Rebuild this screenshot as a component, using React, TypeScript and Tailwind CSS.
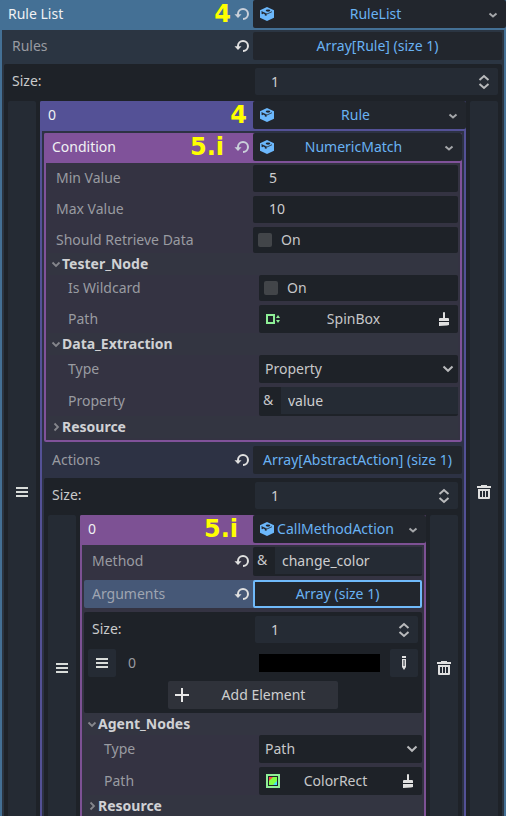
import React, { useId } from "react";

type Kids = { children?: React.ReactNode };

/* ---------- icons ---------- */

const CubeIcon = () => (
  <svg width="16" height="16" viewBox="0 0 16 16" className="shrink-0" aria-hidden="true">
    <path d="M8 1 15 4.200V11.800L8 15 1 11.800V4.200Z" fill="#6cb8fc" />
    <path d="M2.600 5.600 8 8 13 5.700" fill="none" stroke="#22262d" strokeWidth=".8" />
    <path d="M2.600 5.600 7.600 7.900V9.800L5.800 9.400V8.200L4.200 7.600 3.200 8.300 2.600 8Z" fill="#22262d" />
    <ellipse cx="9" cy="4.600" rx="2.300" ry="1.100" fill="#22262d" />
  </svg>
);

const RevertIcon = ({ color = "#e0e0e0" }: { color?: string }) => (
  <svg width="16" height="16" viewBox="0 0 16 16" fill="none" aria-hidden="true">
    <path d="M4 9V8a5 5 0 1 1 5 5" stroke={color} strokeWidth="2" />
    <path d="M.5 8.200H7.500L4 12Z" fill={color} />
  </svg>
);

const Chevron = ({ color = "#a5a7aa" }: { color?: string }) => (
  <svg width="10" height="8" viewBox="0 0 10 8" fill="none" aria-hidden="true">
    <path d="M1.500 2.500 5 5.500 8.500 2.500" stroke={color} strokeWidth="2" />
  </svg>
);

const FoldIcon = ({ open }: { open: boolean }) => (
  <svg width="10" height="10" viewBox="0 0 10 10" fill="none" aria-hidden="true">
    <path d={open ? "M1.500 3.500 5 7 8.500 3.500" : "M3.500 1.500 7 5 3.500 8.500"} stroke="#85868c" strokeWidth="1.800" />
  </svg>
);

const SelectArrow = () => (
  <svg width="12" height="8" viewBox="0 0 12 8" fill="none" aria-hidden="true">
    <path d="M1.500 1.500 6 5.800 10.500 1.500" stroke="#b9babc" strokeWidth="2" />
  </svg>
);

const UpDownIcon = () => (
  <svg width="12" height="16" viewBox="0 0 12 16" fill="none" aria-hidden="true">
    <path d="M1.500 6 6 2l4.500 4M1.500 10 6 14l4.500-4" stroke="#b9babc" strokeWidth="2" />
  </svg>
);

const GripIcon = () => (
  <svg width="12" height="10" viewBox="0 0 12 10" fill="#d8dcd9" aria-hidden="true">
    <path d="M0 0h12v2H0zM0 4h12v2H0zM0 8h12v2H0z" />
  </svg>
);

const TrashIcon = () => (
  <svg width="14" height="14" viewBox="0 0 14 14" aria-hidden="true">
    <path
      fill="#e0e0e0"
      fillRule="evenodd"
      d="M4 0h6v1h4v2H0V1h4zM1 4h12v9a1 1 0 0 1-1 1H2a1 1 0 0 1-1-1zM3 6v6h2V6zM6 6v6h2V6zM9 6v6h2V6z"
    />
  </svg>
);

const BrushIcon = () => (
  <svg width="16" height="16" viewBox="0 0 16 16" fill="#e0e0e0" aria-hidden="true">
    <path d="M7 2a1 1 0 0 1 2 0V7h3a1 1 0 0 1 1 1v2H3V8a1 1 0 0 1 1-1h3zM3 11h10v3l-2 .500L3 15z" />
  </svg>
);

const PencilIcon = () => (
  <svg width="6" height="14" viewBox="0 0 6 14" aria-hidden="true">
    <path fill="#e0e0e0" fillRule="evenodd" d="M1 0h4v2H1zM1 3h4v8l-2 3-2-3zM2.500 4v6h1V4z" />
  </svg>
);

const PlusIcon = () => (
  <svg width="14" height="14" viewBox="0 0 14 14" fill="#e8e8e8" aria-hidden="true">
    <path d="M6 0h2v6h6v2H8v6H6V8H0V6h6z" />
  </svg>
);

const SpinBoxIcon = () => (
  <svg width="16" height="16" viewBox="0 0 16 16" aria-hidden="true">
    <path d="M2 4h7v8H2z" fill="none" stroke="#8eef97" strokeWidth="2" />
    <path d="M11 7 13 4l2 3zM11 9l2 3 2-3z" fill="#8eef97" />
  </svg>
);

const ColorRectIcon = () => (
  <svg width="16" height="16" viewBox="0 0 16 16" aria-hidden="true">
    <path d="M2 2h12v12H2z" fill="none" stroke="#8eef97" strokeWidth="2" />
    <path d="M4 4h8v8H4z" fill="#80ff45" />
    <path d="M4 4h4L4 8z" fill="#ff4545" />
    <path d="M12 8v4H8z" fill="#45d7ff" />
  </svg>
);

/* ---------- building blocks ---------- */

const Revert = ({ soft }: { soft?: boolean }) => (
  <button type="button" aria-label="Revert value" className="mr-[3px] flex h-4 w-4 shrink-0 items-center justify-center">
    <RevertIcon color={soft ? "#c9d0da" : "#e0e0e0"} />
  </button>
);

const Mark = ({ className, children }: Kids & { className: string }) => (
  <span className={`ml-auto font-['DejaVu_Sans',sans-serif] text-2xl leading-6 font-bold text-[#ffff00] ${className}`}>
    {children}
  </span>
);

type PickerProps = Kids & { label: string; type: string; width: string; color: string };

/* Coloured title bar of a sub-resource with its type picker. */
const ResourceHeader = ({ label, type, width, color, children }: PickerProps) => {
  const id = useId();
  return (
    <div className={`flex h-[30px] items-stretch rounded-t-xs ${color}`}>
      <div className={`flex shrink-0 items-center pb-[2px] pl-2 ${width}`}>
        <label htmlFor={id} className="text-[#f0f1f3]">{label}</label>
        {children}
      </div>
      <div className="mb-[2px] flex min-w-0 flex-1 rounded-xs bg-[#22262d]">
        <button id={id} type="button" className="flex min-w-0 flex-1 items-center pl-[6px] text-[#69b2f3]">
          <CubeIcon />
          <span className="flex-1 text-center whitespace-nowrap">{type}</span>
        </button>
        <button type="button" aria-label={`${type} options`} className="flex w-[30px] items-center justify-end pt-[2px] pr-2">
          <Chevron />
        </button>
      </div>
    </div>
  );
};

const Row = ({
  label,
  id,
  width,
  indent = "pl-2",
  height = "h-7",
  tone = "text-[#999ba1]",
  revert,
  children,
}: Kids & { label: string; id: string; width: string; indent?: string; height?: string; tone?: string; revert?: boolean }) => (
  <div className={`flex items-stretch ${height}`}>
    <div className={`flex shrink-0 items-center justify-between pb-px ${width} ${indent}`}>
      <label htmlFor={id} className={tone}>{label}</label>
      {revert && <Revert />}
    </div>
    {children}
  </div>
);

const ArrayRow = ({ label, text, width, active }: { label: string; text: string; width: string; active?: boolean }) => {
  const id = useId();
  return (
    <div className={active ? "rounded-xs bg-[#465877]" : ""}>
      <Row label={label} id={id} width={width} revert tone={active ? "text-[#9fa5b1]" : "text-[#999ba1]"}>
        <button
          id={id}
          type="button"
          className={`min-w-0 flex-1 rounded-xs bg-[#22262d] whitespace-nowrap text-[#69b2f3] ${active ? "border-2 border-[#70bafa]" : ""}`}
        >
          {text}
        </button>
      </Row>
    </div>
  );
};

const SizeRow = ({ width }: { width: string }) => {
  const id = useId();
  return (
    <Row label="Size:" id={id} width={width} indent="pl-1" height="h-[27px]" tone="text-[#c9cacc]">
      <div className="flex min-w-0 flex-1 items-center rounded-xs bg-[#252b34] pr-2">
        <input id={id} type="text" defaultValue="1" className="h-full min-w-0 flex-1 bg-transparent pb-px pl-4 text-[#cdcecf] outline-none" />
        <button type="button" aria-label="Change size">
          <UpDownIcon />
        </button>
      </div>
    </Row>
  );
};

const NumberRow = ({ label, value, width }: { label: string; value: string; width: string }) => {
  const id = useId();
  return (
    <Row label={label} id={id} width={width} height="h-[27px]">
      <input id={id} type="text" defaultValue={value} className="min-w-0 flex-1 rounded-xs bg-[#1e2228] pb-px pl-4 text-[#cdcecf] outline-none" />
    </Row>
  );
};

const CheckRow = ({ label, width, indent }: { label: string; width: string; indent?: string }) => {
  const id = useId();
  return (
    <Row label={label} id={id} width={width} indent={indent} height="h-[26px]">
      <label className="flex min-w-0 flex-1 items-center rounded-xs bg-[#1e2228] pl-[5px] text-[#c6c7c9]">
        <input id={id} type="checkbox" className="mr-[9px] h-[14px] w-[14px] appearance-none rounded-xs bg-[#424549]" />
        On
      </label>
    </Row>
  );
};

const NodeRow = ({ text, icon, width }: { text: string; icon: React.ReactNode; width: string }) => {
  const id = useId();
  return (
    <Row label="Path" id={id} width={width} indent="pl-5">
      <div className="flex min-w-0 flex-1 rounded-xs bg-[#1e2228]">
        <button id={id} type="button" className="flex min-w-0 flex-1 items-center pl-[6px] text-[#c6c7c9]">
          {icon}
          <span className="flex-1 text-center">{text}</span>
        </button>
        <button type="button" aria-label={`Clear ${text}`} className="flex w-8 items-center justify-end pr-[6px]">
          <BrushIcon />
        </button>
      </div>
    </Row>
  );
};

const SelectRow = ({ label, value, width }: { label: string; value: string; width: string }) => {
  const id = useId();
  return (
    <Row label={label} id={id} width={width} indent="pl-5">
      <div className="grid min-w-0 flex-1 items-center rounded-xs bg-[#1e2228]">
        <select id={id} defaultValue={value} className="col-start-1 row-start-1 h-7 w-full appearance-none bg-transparent pl-[6px] text-[#c6c7c9] outline-none">
          <option>{value}</option>
        </select>
        <span className="pointer-events-none col-start-1 row-start-1 mr-1 justify-self-end">
          <SelectArrow />
        </span>
      </div>
    </Row>
  );
};

const NameRow = ({ label, value, width, indent, revert }: { label: string; value: string; width: string; indent?: string; revert?: boolean }) => {
  const id = useId();
  return (
    <Row label={label} id={id} width={width} indent={indent} height="h-[29px]" revert={revert}>
      <div className="flex min-w-0 flex-1 rounded-xs bg-[#1e2228] pb-[2px]">
        <span className="flex w-[22px] items-center pb-px pl-1 text-[#c6c7c9]">&amp;</span>
        <input id={id} type="text" defaultValue={value} className="min-w-0 flex-1 bg-[#252b34] pl-[7px] text-[#cdcecf] outline-none" />
      </div>
    </Row>
  );
};

const Section = ({ title, open = false }: { title: string; open?: boolean }) => (
  <button type="button" aria-expanded={open} className="flex h-[22px] w-full items-center bg-[#333541] pl-[3px] font-bold text-[#d0d1d4]">
    <FoldIcon open={open} />
    <span className="pl-px">{title}</span>
  </button>
);

/* One entry of an array: drag handle, contents, delete button. */
const ArrayItem = ({ children }: Kids) => (
  <div className="mt-[6px] flex items-stretch gap-1">
    <button type="button" aria-label="Move element" className="flex w-7 shrink-0 items-center justify-center rounded-xs bg-[#252b34]">
      <GripIcon />
    </button>
    <div className="min-w-0 flex-1">{children}</div>
    <button type="button" aria-label="Remove element" className="flex w-7 shrink-0 items-center justify-center rounded-xs bg-[#252b34]">
      <TrashIcon />
    </button>
  </div>
);

/* ---------- resources ---------- */

const Condition = () => (
  <div className="rounded-xs bg-[#80529a]">
    <ResourceHeader label="Condition" type="NumericMatch" width="w-[209px]" color="bg-[#80529a]">
      <Mark className="mr-[10px]">5.i</Mark>
      <Revert soft />
    </ResourceHeader>
    <div className="px-[2px] pb-[2px]">
      <div className="bg-[#343342] p-[2px]">
        <div className="flex flex-col gap-1">
          <NumberRow label="Min Value" value="5" width="w-[205px]" />
          <NumberRow label="Max Value" value="10" width="w-[205px]" />
          <CheckRow label="Should Retrieve Data" width="w-[205px]" />
        </div>
        <Section title="Tester_Node" open />
        <div className="flex flex-col gap-1">
          <CheckRow label="Is Wildcard" width="w-[211px]" indent="pl-5" />
          <NodeRow text="SpinBox" icon={<SpinBoxIcon />} width="w-[211px]" />
        </div>
        <Section title="Data_Extraction" open />
        <div className="flex flex-col gap-1">
          <SelectRow label="Type" value="Property" width="w-[211px]" />
          <NameRow label="Property" value="value" width="w-[211px]" indent="pl-5" />
        </div>
        <Section title="Resource" />
      </div>
    </div>
  </div>
);

const ArgumentsPanel = () => {
  const id = useId();
  return (
    <div className="rounded-xs bg-[#1e2228] p-1">
      <SizeRow width="w-[167px]" />
      <div className="mt-[6px] flex h-7 items-center">
        <button type="button" aria-label="Move element" className="flex h-7 w-7 items-center justify-center rounded-xs bg-[#252b34]">
          <GripIcon />
        </button>
        <label htmlFor={id} className="w-[143px] pl-3 text-[#999ba1]">0</label>
        <input
          id={id}
          type="color"
          defaultValue="#000000"
          className="h-[18px] min-w-0 flex-1 appearance-none border-0 bg-black p-0 [&::-webkit-color-swatch]:border-0 [&::-webkit-color-swatch-wrapper]:p-0"
        />
        <button type="button" aria-label="Edit element" className="ml-[10px] flex h-7 w-7 items-center justify-center rounded-xs bg-[#252b34]">
          <PencilIcon />
        </button>
      </div>
      <button type="button" className="mx-auto mt-1 flex h-7 w-[170px] items-center rounded-xs bg-[#2f323a] pl-[7px] text-[#cdcecf]">
        <PlusIcon />
        <span className="flex-1 text-center">Add Element</span>
      </button>
    </div>
  );
};

const Action = () => (
  <div className="rounded-xs bg-[#7d5194]">
    <ResourceHeader label="0" type="CallMethodAction" width="w-[173px]" color="bg-[#7d5194]">
      <Mark className="mr-[15px]">5.i</Mark>
    </ResourceHeader>
    <div className="px-[2px] pb-[2px]">
      <div className="bg-[#343342] p-[2px]">
        <div className="flex flex-col gap-1">
          <NameRow label="Method" value="change_color" width="w-[169px]" revert />
          <ArrayRow label="Arguments" text="Array (size 1)" width="w-[169px]" active />
          <ArgumentsPanel />
        </div>
        <Section title="Agent_Nodes" open />
        <div className="flex flex-col gap-1">
          <SelectRow label="Type" value="Path" width="w-[175px]" />
          <NodeRow text="ColorRect" icon={<ColorRectIcon />} width="w-[175px]" />
        </div>
        <Section title="Resource" />
      </div>
    </div>
  </div>
);

const Rule = () => (
  <div className="rounded-xs bg-[#545196]">
    <ResourceHeader label="0" type="Rule" width="w-[213px]" color="bg-[#545196]">
      <Mark className="mr-[6px]">4</Mark>
    </ResourceHeader>
    <div className="px-[2px] pb-[2px]">
      <div className="flex flex-col gap-1 bg-[#2d3244] px-[2px] pt-[2px] pb-6">
        <Condition />
        <ArrayRow label="Actions" text="Array[AbstractAction] (size 1)" width="w-[209px]" />
        <div className="rounded-xs bg-[#1e2228] px-1 pt-1 pb-9">
          <SizeRow width="w-[207px]" />
          <ArrayItem>
            <Action />
          </ArrayItem>
        </div>
      </div>
    </div>
  </div>
);

export default function App() {
  return (
    <main className="h-screen overflow-hidden bg-[#447095] font-['Noto_Sans','Open_Sans',sans-serif] text-sm leading-5">
      <ResourceHeader label="Rule List" type="RuleList" width="w-[253px]" color="bg-[#447095]">
        <Mark className="mr-[3px]">4</Mark>
        <Revert soft />
      </ResourceHeader>
      <div className="px-[2px]">
        <div className="flex flex-col gap-1 bg-[#2b3542] px-[2px] pt-[2px]">
          <ArrayRow label="Rules" text="Array[Rule] (size 1)" width="w-[249px]" />
          <div className="rounded-xs bg-[#1e2228] p-1">
            <SizeRow width="w-[247px]" />
            <ArrayItem>
              <Rule />
            </ArrayItem>
          </div>
        </div>
      </div>
    </main>
  );
}
